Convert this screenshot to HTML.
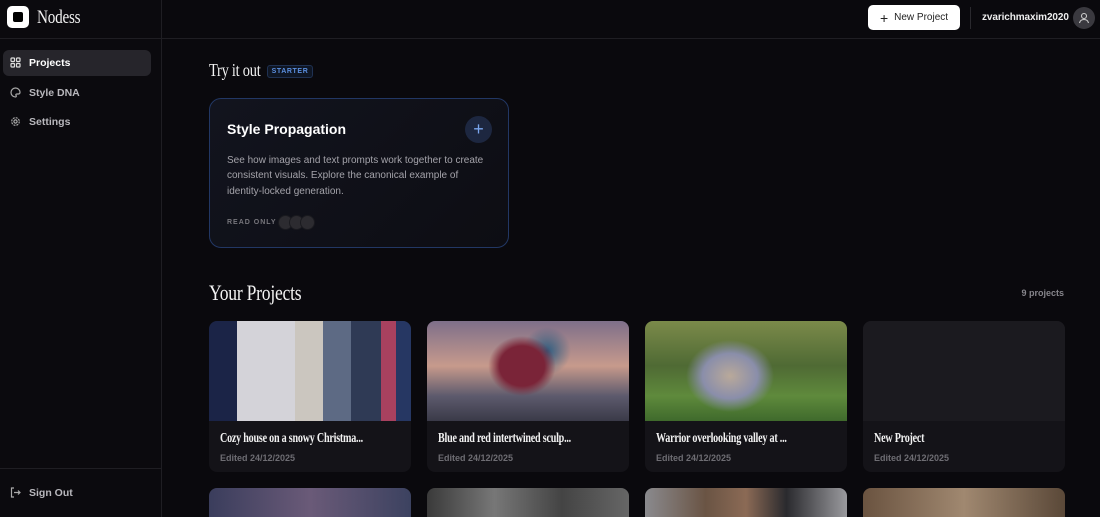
<!DOCTYPE html>
<html><head><meta charset="utf-8"><style>
*{box-sizing:border-box;margin:0;padding:0}
html,body{width:1100px;height:517px;overflow:hidden}
body{background:#0a090d;font-family:"Liberation Sans",sans-serif;color:#e8e8ea;position:relative}
.side{position:absolute;left:0;top:0;width:162px;height:517px;border-right:1px solid #1f1e23;background:#0b0a0e}
.hdr{position:absolute;left:162px;top:0;right:0;height:39px;border-bottom:1px solid #1f1e23}
.sideTop{height:39px;border-bottom:1px solid #1f1e23;position:relative}
.logo{position:absolute;left:7px;top:6px;width:22px;height:22px;background:#fff;border-radius:5px}
.logo:after{content:"";position:absolute;left:6px;top:6px;width:10px;height:10px;background:#000;border-radius:2px}
.serif{font-family:"Liberation Serif",serif;display:inline-block;transform:scaleX(.8);transform-origin:left center;letter-spacing:-.3px}
.brand{position:absolute;left:37px;top:7px;font-size:19px;color:#f2f2f2}
.nav{position:absolute;left:3px;width:148px;height:26px;border-radius:6px;font-size:10.5px;font-weight:bold;color:#b9b8bd;display:flex;align-items:center;padding-left:26px}
.nav svg{position:absolute;left:7px;top:7px}
.act{background:#26252b;color:#fff}
.so{position:absolute;left:0;top:468px;width:161px;border-top:1px solid #1f1e23}
.btn{position:absolute;left:868px;top:5px;width:92px;height:25px;background:#fff;border-radius:5px;color:#222;font-size:10px;display:flex;align-items:center;justify-content:center;gap:6px}
.user{position:absolute;left:982px;top:12px;font-size:10px;font-weight:bold;color:#eee;letter-spacing:-.1px}
.av{position:absolute;left:1073px;top:7px;width:22px;height:22px;border-radius:50%;background:#3a393f}
.vsep{position:absolute;left:970px;top:7px;width:1px;height:22px;background:#2a292e}
.h2{position:absolute;color:#f3f3f3}
.tag{position:absolute;left:267px;top:65px;width:46px;height:13px;border:1px solid #1f3152;background:#0f1624;border-radius:3px;color:#5b8fe0;font-size:7px;font-weight:bold;letter-spacing:.6px;text-align:center;line-height:11px}
.try{position:absolute;left:209px;top:98px;width:300px;height:150px;border:1.5px solid #223764;border-radius:12px;background:linear-gradient(135deg,#12141e,#0d0d13)}
.try h3{position:absolute;left:17px;top:22px;font-size:14px;color:#fff}
.plus{position:absolute;left:255px;top:17px;width:27px;height:27px;border-radius:50%;background:#1d2740;color:#7aa6ee;font-size:18px;text-align:center;line-height:26px}
.try p{position:absolute;left:17px;top:54px;width:268px;font-size:10px;line-height:15.3px;color:#a4a3aa}
.ro{position:absolute;left:17px;top:120px;font-size:7px;letter-spacing:1px;font-weight:bold;color:#77767c}
.dot{position:absolute;top:116px;width:15px;height:15px;border-radius:50%;background:#2c2b30;border:1px solid #1a1a1f}
.card{position:absolute;top:321px;width:202px;height:151px;border-radius:8px;background:#141318;overflow:hidden}
.img{height:100px}
.card .t{position:absolute;left:11px;top:110px;font-size:14px;font-weight:bold;color:#f2f2f2;white-space:nowrap;transform:scaleX(.72)}
.card .d{position:absolute;left:11px;top:132px;font-size:9px;font-weight:bold;color:#6e6d73}
.r2{position:absolute;top:488px;width:202px;height:29px;border-radius:8px 8px 0 0;overflow:hidden}
</style></head><body>
<div class="side">
 <div class="sideTop"><div class="logo"></div><div class="brand serif">Nodess</div></div>
 <div class="nav act" style="top:50px"><svg width="11" height="11" viewBox="0 0 11 11" fill="none" stroke="#ddd" stroke-width="1.2"><rect x="1" y="1" width="3.5" height="3.5" rx=".8"/><rect x="6.5" y="1" width="3.5" height="3.5" rx=".8"/><rect x="1" y="6.5" width="3.5" height="3.5" rx=".8"/><rect x="6.5" y="6.5" width="3.5" height="3.5" rx=".8"/></svg>Projects</div>
 <div class="nav" style="top:80px"><svg width="11" height="11" viewBox="0 0 11 11" fill="none" stroke="#aaa" stroke-width="1.2"><path d="M5.5 1a4.5 4.5 0 1 0 0 9c1 0 1-1 .5-1.6-.5-.6 0-1.4.8-1.4H8.5A1.8 1.8 0 0 0 10 5.2 4.5 4.5 0 0 0 5.5 1z"/></svg>Style DNA</div>
 <div class="nav" style="top:109px"><svg width="11" height="11" viewBox="0 0 11 11" fill="none" stroke="#aaa" stroke-width="1.2"><circle cx="5.5" cy="5.5" r="1.6"/><circle cx="5.5" cy="5.5" r="3.8" stroke-dasharray="2 1"/></svg>Settings</div>
 <div class="so"><div class="nav" style="top:11px"><svg width="11" height="11" viewBox="0 0 11 11" fill="none" stroke="#aaa" stroke-width="1.2"><path d="M4 1H1.5v9H4M4 5.5h6M8 3.5l2 2-2 2"/></svg>Sign Out</div></div>
</div>
<div class="hdr"></div>
<div class="btn"><span style="font-size:14px">+</span>New Project</div>
<div class="vsep"></div>
<div class="user">zvarichmaxim2020</div>
<div class="av"><svg width="22" height="22" viewBox="0 0 22 22" fill="none" stroke="#ccc" stroke-width="1.1"><circle cx="11" cy="9" r="2.5"/><path d="M6.5 16c.5-2.5 2.5-3.5 4.5-3.5s4 1 4.5 3.5"/></svg></div>

<div class="h2 serif" style="left:209px;top:60px;font-size:18px">Try it out</div>
<div class="tag">STARTER</div>
<div class="try">
 <h3>Style Propagation</h3>
 <div class="plus">+</div>
 <p>See how images and text prompts work together to create consistent visuals. Explore the canonical example of identity-locked generation.</p>
 <div class="ro">READ ONLY</div>
 <div class="dot" style="left:68px"></div><div class="dot" style="left:79px"></div><div class="dot" style="left:90px"></div>
</div>

<div class="h2 serif" style="left:209px;top:280px;font-size:22px">Your Projects</div>
<div style="position:absolute;right:36px;top:288px;font-size:9px;font-weight:bold;color:#86858b">9 projects</div>

<div class="card" style="left:209px"><div class="img" style="background:linear-gradient(90deg,#1b2447 0 28px,#d4d3d9 28px 86px,#cbc6bf 86px 114px,#5d6a84 114px 142px,#2f3a55 142px 172px,#a8415f 172px 187px,#263763 187px)"></div><div class="t serif">Cozy house on a snowy Christma...</div><div class="d">Edited 24/12/2025</div></div>
<div class="card" style="left:427px"><div class="img" style="background:radial-gradient(ellipse 45px 40px at 95px 45px,#7a2438 0,#7a2438 50%,transparent 75%),radial-gradient(ellipse 30px 30px at 120px 30px,#2d5c80 0,transparent 80%),linear-gradient(#7e6f8a 0,#c79a8c 45%,#5d5a6d 75%,#3a3a48)"></div><div class="t serif">Blue and red intertwined sculp...</div><div class="d">Edited 24/12/2025</div></div>
<div class="card" style="left:645px"><div class="img" style="background:radial-gradient(ellipse 55px 45px at 85px 55px,#b9a99a 0,#8a8eaa 50%,transparent 80%),linear-gradient(#7b8a4a 0,#4f6a34 45%,#5f8a3c 75%,#3f6a2c)"></div><div class="t serif">Warrior overlooking valley at ...</div><div class="d">Edited 24/12/2025</div></div>
<div class="card" style="left:863px"><div class="img" style="background:#1b1a1f"></div><div class="t serif">New Project</div><div class="d">Edited 24/12/2025</div></div>

<div class="r2" style="left:209px;background:linear-gradient(90deg,#3a3d5c,#6a5a78,#3c4260)"></div>
<div class="r2" style="left:427px;background:linear-gradient(90deg,#3a3a3a,#777,#444,#666)"></div>
<div class="r2" style="left:645px;background:linear-gradient(90deg,#8a8a8e,#6a5444 30%,#8b6a55 50%,#2a2a2e 70%,#9a9a9e)"></div>
<div class="r2" style="left:863px;background:linear-gradient(90deg,#6a5340,#a08870,#5a4838)"></div>
</body></html>
